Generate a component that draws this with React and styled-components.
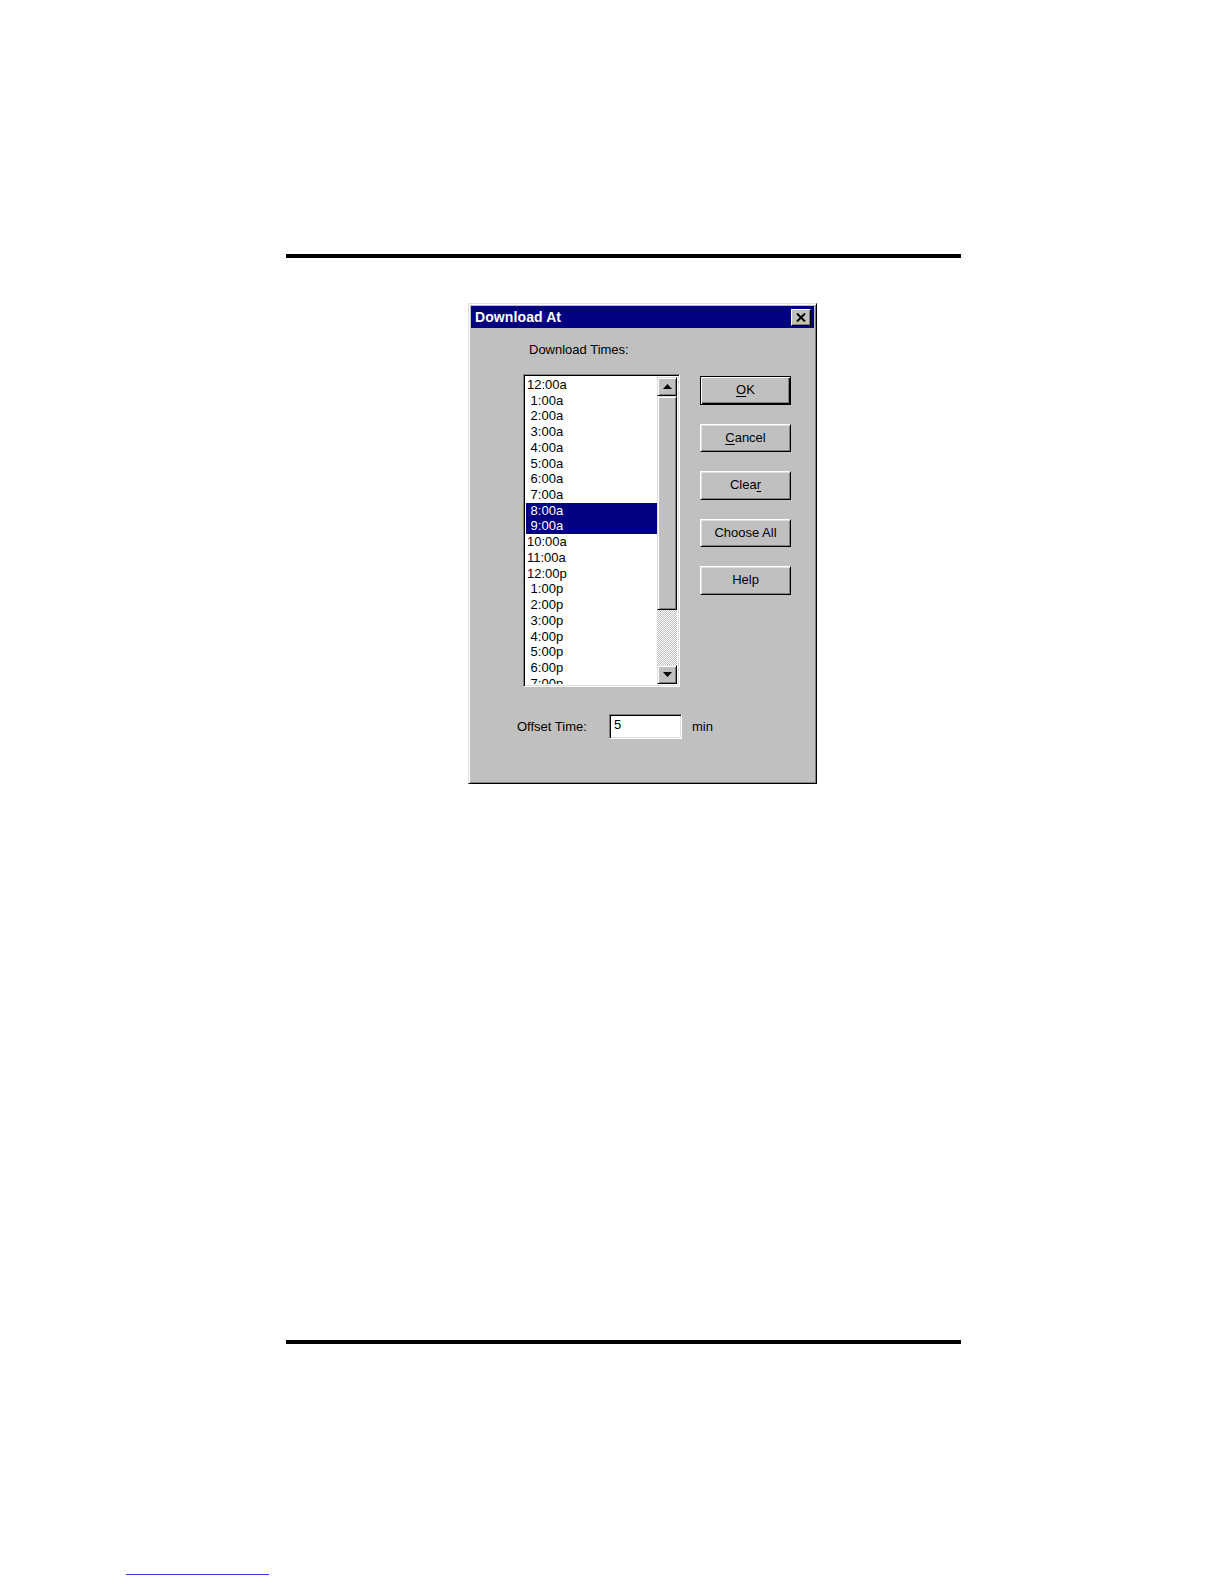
import React from 'react';
import styled, { createGlobalStyle } from 'styled-components';

const GlobalStyle = createGlobalStyle`
  html, body {
    margin: 0;
    padding: 0;
    background: #fff;
  }
  body {
    font-family: 'Liberation Sans', Arial, sans-serif;
  }
`;

const Page = styled.div`
  width: 1224px;
  height: 1584px;
  padding-top: 254px;
  box-sizing: border-box;
  background: #fff;
  overflow: hidden;
`;

const Rule = styled.div`
  margin-left: 286px;
  width: 675px;
  height: 4px;
  background: #000;
  margin-top: ${(p) => p.$top || 0}px;
`;

const LinkLine = styled.div`
  margin-left: 126px;
  margin-top: 230px;
  width: 143px;
  height: 1px;
  background: #3a3af0;
`;

const DialogRow = styled.div`
  padding-left: 468px;
  margin-top: 45px;
`;

const Dialog = styled.div`
  width: 349px;
  height: 481px;
  box-sizing: border-box;
  background: #c0c0c0;
  border: 1px solid;
  border-color: #dfdfdf #000 #000 #dfdfdf;
  box-shadow: inset 1px 1px #fff, inset -1px -1px #808080;
  padding: 2px;
  display: flex;
  flex-direction: column;
`;

const TitleBar = styled.div`
  height: 22px;
  background: #000080;
  display: flex;
  align-items: center;
  justify-content: space-between;
  padding: 0 3px 0 4px;
`;

const Title = styled.span`
  color: #fff;
  font-weight: bold;
  font-size: 14px;
  letter-spacing: 0.1px;
`;

const CloseBox = styled.div`
  width: 20px;
  height: 17px;
  box-sizing: border-box;
  background: #c0c0c0;
  border: 1px solid;
  border-color: #fff #000 #000 #fff;
  box-shadow: inset -1px -1px #808080;
  display: flex;
  align-items: center;
  justify-content: center;
`;

const Body = styled.div`
  padding: 13px 0 0 46px;
  color: #000;
  font-size: 13px;
`;

const Caption = styled.div`
  margin-left: 12px;
  height: 18px;
  line-height: 18px;
`;

const MainRow = styled.div`
  display: flex;
  gap: 20px;
  margin-top: 15px;
  margin-left: 6px;
`;

const ListBox = styled.div`
  width: 157px;
  height: 313px;
  box-sizing: border-box;
  border: 1px solid;
  border-color: #808080 #fff #fff #808080;
  box-shadow: inset 1px 1px #000, inset -1px -1px #dfdfdf;
  padding: 2px;
  display: flex;
  background: #fff;
`;

const Items = styled.div`
  flex: 1;
  overflow: hidden;
`;

const Item = styled.div`
  height: 15.73px;
  line-height: 15.73px;
  padding-left: 1px;
  white-space: pre;
  background: ${(p) => (p.$selected ? '#000080' : '#fff')};
  color: ${(p) => (p.$selected ? '#fff' : '#000')};
`;

const ScrollBar = styled.div`
  width: 20px;
  display: flex;
  flex-direction: column;
  background-color: #fff;
  background-image: repeating-conic-gradient(#c0c0c0 0% 25%, #fff 0% 50%);
  background-size: 2px 2px;
`;

const Raised = styled.div`
  box-sizing: border-box;
  background: #c0c0c0;
  border: 1px solid;
  border-color: #dfdfdf #000 #000 #dfdfdf;
  box-shadow: inset 1px 1px #fff, inset -1px -1px #808080;
`;

const ArrowBtn = styled(Raised)`
  height: 19px;
  display: flex;
  align-items: center;
  justify-content: center;
`;

const Thumb = styled(Raised)`
  height: 214px;
`;

const Track = styled.div`
  flex: 1;
`;

const Buttons = styled.div`
  display: flex;
  flex-direction: column;
  gap: 19px;
  padding-top: 2px;
`;

const Button = styled.div`
  width: 91px;
  height: 28.5px;
  box-sizing: border-box;
  background: #c0c0c0;
  border: 1px solid;
  border-color: ${(p) => (p.$default ? '#000' : '#fff #000 #000 #fff')};
  box-shadow: ${(p) =>
    p.$default
      ? 'inset 1px 1px #fff, inset -1px -1px #000, inset -2px -2px #808080'
      : 'inset 1px 1px #dfdfdf, inset -1px -1px #808080'};
  display: flex;
  align-items: center;
  justify-content: center;
  font-size: 13px;
  padding-bottom: 1px;
`;

const Key = styled.span`
  text-decoration: underline;
  text-underline-offset: 2px;
`;

const OffsetRow = styled.div`
  display: flex;
  align-items: center;
  margin-top: 27px;
`;

const OffsetLabel = styled.span`
  width: 92px;
`;

const TextField = styled.div`
  width: 73px;
  height: 25px;
  box-sizing: border-box;
  background: #fff;
  border: 1px solid;
  border-color: #808080 #fff #fff #808080;
  box-shadow: inset 1px 1px #000, inset -1px -1px #dfdfdf;
  padding: 1px 0 0 4px;
  line-height: 18px;
`;

const Unit = styled.span`
  margin-left: 10px;
`;

const times = [
  '12:00a', ' 1:00a', ' 2:00a', ' 3:00a', ' 4:00a', ' 5:00a', ' 6:00a', ' 7:00a',
  ' 8:00a', ' 9:00a', '10:00a', '11:00a', '12:00p', ' 1:00p', ' 2:00p', ' 3:00p',
  ' 4:00p', ' 5:00p', ' 6:00p', ' 7:00p', ' 8:00p', ' 9:00p', '10:00p', '11:00p',
];

const selected = [8, 9];

const Arrow = ({ down }) => (
  <svg width="9" height="5" viewBox="0 0 9 5">
    <polygon points={down ? '0,0 9,0 4.5,5' : '0,5 9,5 4.5,0'} fill="#000" />
  </svg>
);

export default function App() {
  return (
    <Page>
      <GlobalStyle />
      <Rule />
      <DialogRow>
        <Dialog>
          <TitleBar>
            <Title>Download At</Title>
            <CloseBox>
              <svg width="10" height="9" viewBox="0 0 10 9">
                <path d="M1 0.5 L9 8.5 M9 0.5 L1 8.5" stroke="#000" strokeWidth="2" />
              </svg>
            </CloseBox>
          </TitleBar>
          <Body>
            <Caption>Download Times:</Caption>
            <MainRow>
              <ListBox>
                <Items>
                  {times.map((t, i) => (
                    <Item key={i} $selected={selected.includes(i)}>
                      {t}
                    </Item>
                  ))}
                </Items>
                <ScrollBar>
                  <ArrowBtn>
                    <Arrow />
                  </ArrowBtn>
                  <Thumb />
                  <Track />
                  <ArrowBtn>
                    <Arrow down />
                  </ArrowBtn>
                </ScrollBar>
              </ListBox>
              <Buttons>
                <Button $default>
                  <span>
                    <Key>O</Key>K
                  </span>
                </Button>
                <Button>
                  <span>
                    <Key>C</Key>ancel
                  </span>
                </Button>
                <Button>
                  <span>
                    Clea<Key>r</Key>
                  </span>
                </Button>
                <Button>Choose All</Button>
                <Button>Help</Button>
              </Buttons>
            </MainRow>
            <OffsetRow>
              <OffsetLabel>Offset Time:</OffsetLabel>
              <TextField>5</TextField>
              <Unit>min</Unit>
            </OffsetRow>
          </Body>
        </Dialog>
      </DialogRow>
      <Rule $top={556} />
      <LinkLine />
    </Page>
  );
}
